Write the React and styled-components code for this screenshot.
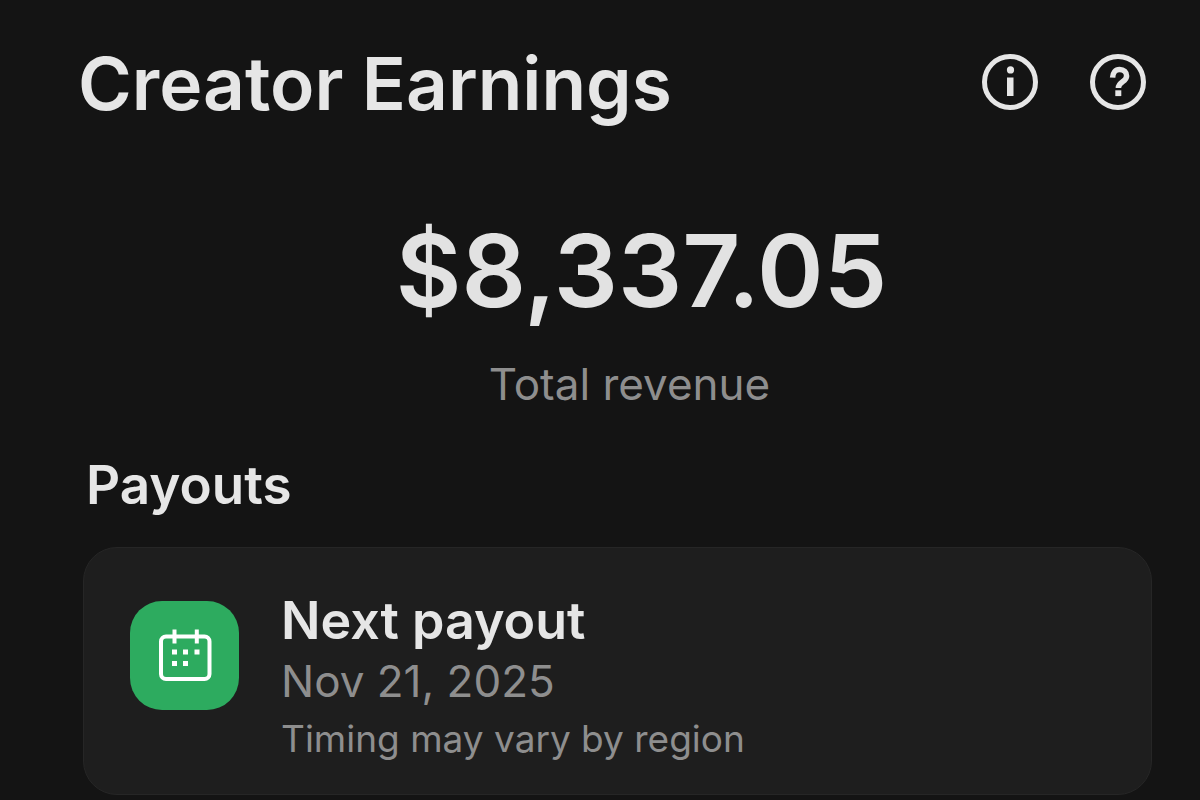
import React from 'react';
import styled, { createGlobalStyle } from 'styled-components';

const GlobalStyle = createGlobalStyle`
  * {
    box-sizing: border-box;
  }

  body {
    margin: 0;
    background: #141414;
    color: #e6e6e6;
    font-family: Inter, 'Liberation Sans', sans-serif;
  }

  h1, h2, h3, p {
    margin: 0;
  }
`;

const Page = styled.main`
  display: flex;
  flex-direction: column;
  padding: 40px 48px 5px 83px;
`;

const Header = styled.header`
  display: flex;
  align-items: center;
  justify-content: space-between;
  padding-right: 5px;
`;

const Title = styled.h1`
  margin-left: -5px;
  font-size: 73px;
  font-weight: 600;
  line-height: 88px;
`;

const Actions = styled.div`
  display: flex;
  gap: 50px;
  padding-bottom: 4px;
`;

const IconButton = styled.button`
  display: flex;
  padding: 0;
  border: 0;
  background: none;
  color: inherit;
  cursor: pointer;
`;

const Summary = styled.section`
  display: flex;
  flex-direction: column;
  align-items: center;
  gap: 24px;
  padding: 80px 0 40px 48px;
`;

const Amount = styled.p`
  color: #e2e2e2;
  font-size: 101px;
  font-weight: 600;
  line-height: 124px;
`;

const Muted = styled.p`
  color: #8e8e8e;
  font-size: ${({ $small }) => $small ? 37 : 44}px;
  line-height: 57px;
`;

const SummaryLabel = styled(Muted)`
  padding-right: 24px;
`;

const Heading = styled.h2`
  padding-left: 3px;
  font-size: 53px;
  font-weight: 600;
  line-height: 64px;
`;

const Card = styled.article`
  display: flex;
  align-items: flex-start;
  gap: 42px;
  margin-top: 30px;
  padding: 41px 46px 27px;
  border: 1px solid #262626;
  border-radius: 34px;
  background: #1e1e1e;
`;

const CardTitle = styled.h3`
  font-size: 52px;
  font-weight: 600;
  line-height: 64px;
`;

const IconTile = styled.div`
  display: flex;
  flex: none;
  align-items: center;
  justify-content: center;
  width: 109px;
  height: 109px;
  margin-top: 12px;
  border-radius: 32px;
  background: #2dab5f;
`;

const InfoIcon = () => (
  <svg width="58" height="58" viewBox="0 0 58 58" fill="none" aria-hidden="true">
    <circle cx="29" cy="29" r="25.5" stroke="currentColor" strokeWidth="5" />
    <circle cx="29.5" cy="16.9" r="3.6" fill="currentColor" />
    <path d="M26 24.500h6.500v18.500h-6.500z" fill="currentColor" />
  </svg>
);

const HelpIcon = () => (
  <svg width="58" height="58" viewBox="0 0 58 58" fill="none" aria-hidden="true">
    <circle cx="29" cy="29" r="25.5" stroke="currentColor" strokeWidth="5" />
    <path
      d="M23.600 24.600c.2-5 2.800-8.100 7-8.100 4.200 0 7 2.700 7 6.500 0 6-8.200 5.700-8.200 11.900"
      stroke="currentColor"
      strokeWidth="5.500"
    />
    <path d="M26.300 37.300h6v5.800h-6z" fill="currentColor" />
  </svg>
);

const CalendarIcon = () => (
  <svg width="54" height="54" viewBox="0 0 54 54" fill="none" aria-hidden="true">
    <rect x="3" y="7.500" width="48.500" height="42.500" rx="5" stroke="#fff" strokeWidth="4" />
    <path d="M16.500 .5v14M38.800 .5v14" stroke="#fff" strokeWidth="4" />
    <path d="M14 20.500h5v5h-5zM25 20.500h5v5h-5zM36.500 20.500h5v5h-5zM14 32h5v5h-5zM25 32h5v5h-5z" fill="#fff" />
  </svg>
);

const App = () => (
  <>
    <GlobalStyle />
    <Page>
      <Header>
        <Title>Creator Earnings</Title>
        <Actions>
          <IconButton type="button" aria-label="Information">
            <InfoIcon />
          </IconButton>
          <IconButton type="button" aria-label="Help">
            <HelpIcon />
          </IconButton>
        </Actions>
      </Header>
      <Summary>
        <Amount>$8,337.05</Amount>
        <SummaryLabel>Total revenue</SummaryLabel>
      </Summary>
      <Heading>Payouts</Heading>
      <Card>
        <IconTile>
          <CalendarIcon />
        </IconTile>
        <div>
          <CardTitle>Next payout</CardTitle>
          <Muted>Nov 21, 2025</Muted>
          <Muted $small>Timing may vary by region</Muted>
        </div>
      </Card>
    </Page>
  </>
);

export default App;
